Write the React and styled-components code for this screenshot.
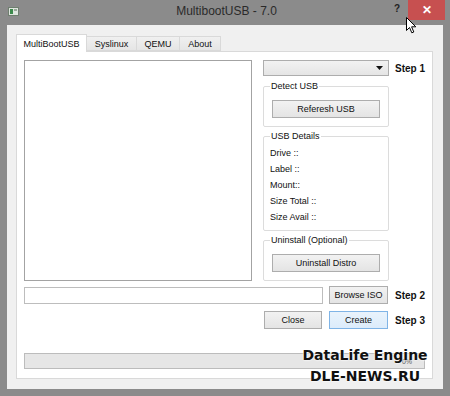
import React from 'react';
import styled, { createGlobalStyle } from 'styled-components';

const GlobalStyle = createGlobalStyle`
  html, body {
    margin: 0;
    padding: 0;
    background: #8c8c8c;
  }
  * {
    box-sizing: border-box;
  }
`;

const uiFont = `"Liberation Sans", Arial, sans-serif`;

const Window = styled.div`
  position: relative;
  width: 450px;
  height: 396px;
  background: #8b8b8b;
  display: flex;
  flex-direction: column;
  font-family: ${uiFont};
  font-size: 9px;
  color: #000;
  overflow: hidden;
`;

const TitleBar = styled.div`
  height: 25px;
  display: grid;
  grid-template-columns: 1fr auto 1fr;
  align-items: start;
  padding: 0 5px 0 8px;
`;

const AppIcon = styled.div`
  margin-top: 7px;
  display: flex;
`;

const Title = styled.div`
  margin-top: 4px;
  font-size: 12px;
  color: #2a2a2a;
  white-space: nowrap;
`;

const TitleButtons = styled.div`
  display: flex;
  justify-content: flex-end;
  align-items: flex-start;
`;

const HelpButton = styled.div`
  margin: 3px 8px 0 0;
  font-size: 10px;
  font-weight: bold;
  color: #222;
`;

const CloseButton = styled.div`
  width: 37px;
  height: 20px;
  background: #c75050;
  color: #fff;
  display: flex;
  align-items: center;
  justify-content: center;
  font-size: 12px;
  font-weight: bold;
`;

const Client = styled.div`
  flex: 1;
  margin: 0 7px 7px 7px;
  background: #f0f0f0;
  padding: 9px 10px 10px 9px;
  display: flex;
  flex-direction: column;
`;

const TabBar = styled.div`
  display: flex;
  align-items: flex-end;
  height: 17px;
  position: relative;
  z-index: 1;
`;

const Tab = styled.div`
  width: ${p => p.$w}px;
  height: ${p => (p.$active ? 18 : 15)}px;
  margin-bottom: ${p => (p.$active ? -1 : 0)}px;
  margin-left: ${p => (p.$first ? 0 : -1)}px;
  display: flex;
  align-items: center;
  justify-content: center;
  border: 1px solid #d9d9d9;
  border-bottom: ${p => (p.$active ? 'none' : '1px solid #d9d9d9')};
  background: ${p =>
    p.$active ? '#fff' : 'linear-gradient(#f0f0f0, #e5e5e5)'};
  color: #111;
`;

const Pane = styled.div`
  flex: 1;
  background: #fff;
  border: 1px solid #d9d9d9;
  padding: 8px 7px 9px 7px;
  display: flex;
  flex-direction: column;
`;

const TopArea = styled.div`
  display: flex;
  height: 221px;
`;

const ListBox = styled.div`
  width: 228px;
  height: 221px;
  background: #fff;
  border: 1px solid #a3a3a3;
`;

const RightColumn = styled.div`
  margin-left: 11px;
  display: flex;
  flex-direction: column;
`;

const Row = styled.div`
  display: flex;
  align-items: center;
  margin-top: ${p => p.$mt || 0}px;
`;

const StepLabel = styled.div`
  margin-left: ${p => p.$ml}px;
  font-size: 10px;
  font-weight: bold;
  color: #111;
`;

const Combo = styled.div`
  width: 126px;
  height: 16px;
  border: 1px solid #adadad;
  background: linear-gradient(#f2f2f2, #e5e5e5);
  display: flex;
  align-items: center;
  justify-content: flex-end;
  padding-right: 5px;
`;

const Group = styled.fieldset`
  width: 126px;
  height: ${p => p.$h}px;
  margin: ${p => p.$mt}px 0 0 0;
  padding: 0 8px;
  border: 1px solid #dcdcdc;
  border-radius: 2px;
  display: flex;
  flex-direction: column;
`;

const Legend = styled.legend`
  margin-left: -2px;
  padding: 0 1px;
  line-height: 11px;
  color: #111;
`;

const Button = styled.div`
  width: ${p => p.$w}px;
  height: 18px;
  margin-top: ${p => p.$mt || 0}px;
  border: 1px solid ${p => (p.$default ? '#7fb4e6' : '#adadad')};
  background: ${p =>
    p.$default
      ? 'linear-gradient(#e9f3fc, #dcecfb)'
      : 'linear-gradient(#f2f2f2, #e4e4e4)'};
  display: flex;
  align-items: center;
  justify-content: center;
  color: #111;
  flex-shrink: 0;
`;

const DetailList = styled.div`
  margin: 3px 0 0 -2px;
  display: flex;
  flex-direction: column;
`;

const DetailLine = styled.div`
  line-height: 16px;
  color: #111;
`;

const TextInput = styled.div`
  width: 299px;
  height: 17px;
  border: 1px solid #bdbdbd;
  background: #fff;
  margin-right: 6px;
`;

const Gap = styled.div`
  width: ${p => p.$w}px;
  flex-shrink: 0;
`;

const Progress = styled.div`
  margin-top: auto;
  width: 401px;
  height: 16px;
  border: 1px solid #bcbcbc;
  background: #e6e6e6;
  display: flex;
  align-items: center;
  justify-content: flex-end;
  padding-right: 12px;
  font-size: 7px;
  color: #555;
`;

const Watermark = styled.div`
  position: absolute;
  left: 299px;
  top: 345px;
  width: 132px;
  text-align: center;
  font-family: "DejaVu Sans", Verdana, sans-serif;
  font-weight: bold;
  font-size: 14px;
  line-height: 21px;
  color: #111;
  text-shadow: 0 0 2px #fff, 0 0 2px #fff;
`;

const Cursor = styled.svg`
  position: absolute;
  left: 406px;
  top: 17px;
`;

const details = ['Drive ::', 'Label ::', 'Mount::', 'Size Total ::', 'Size Avail ::'];

const tabs = [
  { label: 'MultiBootUSB', w: 71, active: true },
  { label: 'Syslinux', w: 51 },
  { label: 'QEMU', w: 44 },
  { label: 'About', w: 42 },
];

const App = () => (
  <>
    <GlobalStyle />
    <Window>
      <TitleBar>
        <AppIcon>
          <svg width="11" height="9" viewBox="0 0 11 9">
            <rect x="0.5" y="0.5" width="10" height="8" fill="#dfe6df" stroke="#6f7f6f" />
            <rect x="2" y="2" width="3" height="5" fill="#3c8a4c" />
            <rect x="6" y="2" width="3" height="2" fill="#9aa89a" />
          </svg>
        </AppIcon>
        <Title>MultibootUSB - 7.0</Title>
        <TitleButtons>
          <HelpButton>?</HelpButton>
          <CloseButton>✕</CloseButton>
        </TitleButtons>
      </TitleBar>
      <Client>
        <TabBar>
          {tabs.map((t, i) => (
            <Tab key={t.label} $w={t.w} $active={t.active} $first={i === 0}>
              {t.label}
            </Tab>
          ))}
        </TabBar>
        <Pane>
          <TopArea>
            <ListBox />
            <RightColumn>
              <Row>
                <Combo>
                  <svg width="7" height="4" viewBox="0 0 7 4">
                    <path d="M0 0 L7 0 L3.5 4 Z" fill="#111" />
                  </svg>
                </Combo>
                <StepLabel $ml={6}>Step 1</StepLabel>
              </Row>
              <Group $h={46} $mt={5}>
                <Legend>Detect USB</Legend>
                <Button $w={108} $mt={8}>Referesh USB</Button>
              </Group>
              <Group $h={100} $mt={4}>
                <Legend>USB Details</Legend>
                <DetailList>
                  {details.map(d => (
                    <DetailLine key={d}>{d}</DetailLine>
                  ))}
                </DetailList>
              </Group>
              <Group $h={46} $mt={4}>
                <Legend>Uninstall (Optional)</Legend>
                <Button $w={108} $mt={8}>Uninstall Distro</Button>
              </Group>
            </RightColumn>
          </TopArea>
          <Row $mt={5}>
            <TextInput />
            <Button $w={59}>Browse ISO</Button>
            <StepLabel $ml={7}>Step 2</StepLabel>
          </Row>
          <Row $mt={7}>
            <Gap $w={240} />
            <Button $w={58}>Close</Button>
            <Gap $w={7} />
            <Button $w={59} $default>Create</Button>
            <StepLabel $ml={7}>Step 3</StepLabel>
          </Row>
          <Progress>0%</Progress>
        </Pane>
      </Client>
      <Watermark>
        DataLife Engine
        <br />
        DLE-NEWS.RU
      </Watermark>
      <Cursor width="11" height="17" viewBox="0 0 11 17">
        <path d="M0.5 0.5 L0.5 13.5 L3.5 10.5 L5.8 15.8 L7.8 15 L5.6 9.8 L9.8 9.8 Z" fill="#fff" stroke="#000" strokeWidth="1" />
      </Cursor>
    </Window>
  </>
);

export default App;
